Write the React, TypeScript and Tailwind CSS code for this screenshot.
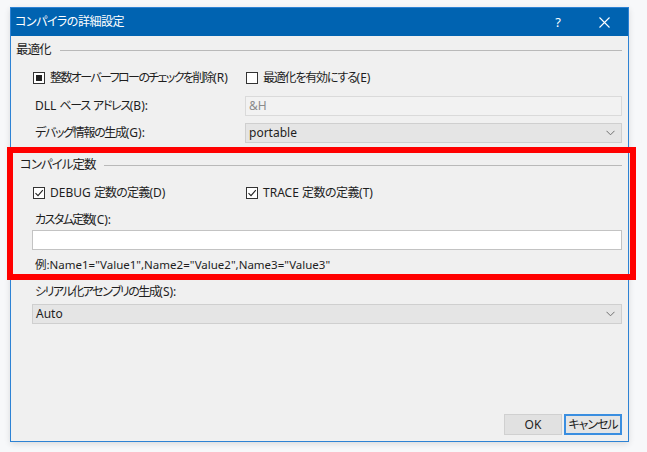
import React from 'react';

const font = "font-['Noto_Sans','Noto_Sans_CJK_JP',sans-serif] [font-feature-settings:'palt']";

function CheckBox({ state }: { state: 'checked' | 'unchecked' | 'indeterminate' }) {
  return (
    <span className="w-[12px] h-[12px] border border-[#333] bg-white flex items-center justify-center shrink-0">
      {state === 'indeterminate' && <span className="w-[6px] h-[6px] bg-[#222]" />}
      {state === 'checked' && (
        <svg width="10" height="10" viewBox="0 0 10 10">
          <path d="M1.5 5.2 L4 7.6 L8.8 2.2" fill="none" stroke="#222" strokeWidth="1.1" />
        </svg>
      )}
    </span>
  );
}

function Chevron() {
  return (
    <svg width="9" height="6" viewBox="0 0 9 6" className="shrink-0">
      <path d="M0.5 0.8 L4.5 4.8 L8.5 0.8" fill="none" stroke="#707070" strokeWidth="1" />
    </svg>
  );
}

function GroupHeader({ label }: { label: string }) {
  return (
    <div className="h-[18px] flex items-center gap-[9px]">
      <span className="text-[12.5px] text-[#1e1e1e] leading-none whitespace-nowrap tracking-[-1px]">{label}</span>
      <div className="flex-1 border-t border-[#b9b9b9]" />
    </div>
  );
}

export default function App() {
  return (
    <div className={`w-[647px] h-[452px] bg-[#f7f8fa] pt-[7px] pl-[10px] ${font}`}>
      <div className="w-[619px] h-[435px] border border-[#2d82d4] bg-[#f0f0f0] flex flex-col shadow-[0_2px_6px_rgba(0,0,0,0.12)]">
        {/* title bar */}
        <div className="h-[28px] bg-[#0063b1] flex items-center pl-[4px] pr-[18px] text-white shrink-0">
          <span className="text-[12px] leading-none tracking-[-0.5px]">コンパイラの詳細設定</span>
          <span className="ml-auto text-[13px] leading-none mr-[38px]">?</span>
          <svg width="11" height="11" viewBox="0 0 11 11">
            <path d="M0.5 0.5 L10.5 10.5 M10.5 0.5 L0.5 10.5" stroke="white" strokeWidth="1.1" />
          </svg>
        </div>

        {/* body */}
        <div className="flex-1 flex flex-col pl-[5px] pr-[6px] text-[12px] text-[#1e1e1e] whitespace-nowrap">
          <div className="mt-[5px]">
            <GroupHeader label="最適化" />
          </div>

          <div className="mt-[10px] h-[18px] flex items-center">
            <div className="w-[230px] pl-[17px] flex items-center gap-[5px]">
              <CheckBox state="indeterminate" />
              <span>
                <span className="tracking-[-1.6px]">整数オーバーフローのチェックを削除</span>(R)
              </span>
            </div>
            <div className="flex items-center gap-[5px]">
              <CheckBox state="unchecked" />
              <span>
                <span className="tracking-[-1.2px]">最適化を有効にする</span>(E)
              </span>
            </div>
          </div>

          <div className="mt-[9px] h-[20px] flex items-center">
            <span className="w-[229px] pl-[19px]">
              DLL <span className="tracking-[-1.3px]">ベース</span> <span className="tracking-[-1.3px]">アドレス</span>(B):
            </span>
            <div className="flex-1 h-[20px] border border-[#dadada] bg-[#f2f2f2] flex items-center pl-[3px] text-[#8c8c8c]">
              &amp;H
            </div>
          </div>

          <div className="mt-[7px] h-[20px] flex items-center">
            <span className="w-[229px] pl-[19px]">
              <span className="tracking-[-1.3px]">デバッグ情報の生成</span>(G):
            </span>
            <div className="flex-1 h-[20px] border border-[#cfcfcf] bg-[#e5e5e5] flex items-center pl-[3px] pr-[6px]">
              <span>portable</span>
              <span className="ml-auto"><Chevron /></span>
            </div>
          </div>

          {/* highlighted group */}
          <div className="mt-[4px] -ml-[9px] -mr-[14px] border-[6px] border-[#ff0000] pl-[7px] pr-[8px]">
            <div className="mt-[3px]">
              <GroupHeader label="コンパイル定数" />
            </div>
            <div className="mt-[10px] h-[18px] flex items-center">
              <div className="w-[226px] pl-[13px] flex items-center gap-[5px]">
                <CheckBox state="checked" />
                <span>
                  DEBUG <span className="tracking-[-0.8px]">定数の定義</span>(D)
                </span>
              </div>
              <div className="flex items-center gap-[5px]">
                <CheckBox state="checked" />
                <span>
                  TRACE <span className="tracking-[-0.5px]">定数の定義</span>(T)
                </span>
              </div>
            </div>
            <div className="mt-[9px] h-[18px] flex items-center pl-[15px]">
              <span className="tracking-[-1.6px]">カスタム定数</span>(C):
            </div>
            <div className="mt-[1px] ml-[12px] h-[20px] border border-[#c3c3c3] bg-white" />
            <div className="mt-[6px] h-[18px] flex items-center pl-[15px] text-[11.5px]">
              例:Name1="Value1",Name2="Value2",Name3="Value3"
            </div>
          </div>

          <div className="mt-[3px] h-[18px] flex items-center pl-[19px]">
            <span className="tracking-[-1.5px]">シリアル化アセンブリの生成</span>(S):
          </div>
          <div className="mt-[3px] ml-[16px] h-[20px] border border-[#cfcfcf] bg-[#e5e5e5] flex items-center pl-[3px] pr-[6px]">
            <span>Auto</span>
            <span className="ml-auto"><Chevron /></span>
          </div>

          <div className="flex-1" />

          <div className="mb-[6px] flex justify-end gap-[2px]">
            <button className="w-[58px] h-[21px] bg-[#e1e1e1] border border-[#d0d0d0] text-[12px] text-[#1e1e1e]">OK</button>
            <button className="w-[58px] h-[21px] bg-[#e5e5e5] border-2 border-[#3a8ee0] text-[12px] text-[#1e1e1e] px-0 tracking-[-1px]">キャンセル</button>
          </div>
        </div>
      </div>
    </div>
  );
}
